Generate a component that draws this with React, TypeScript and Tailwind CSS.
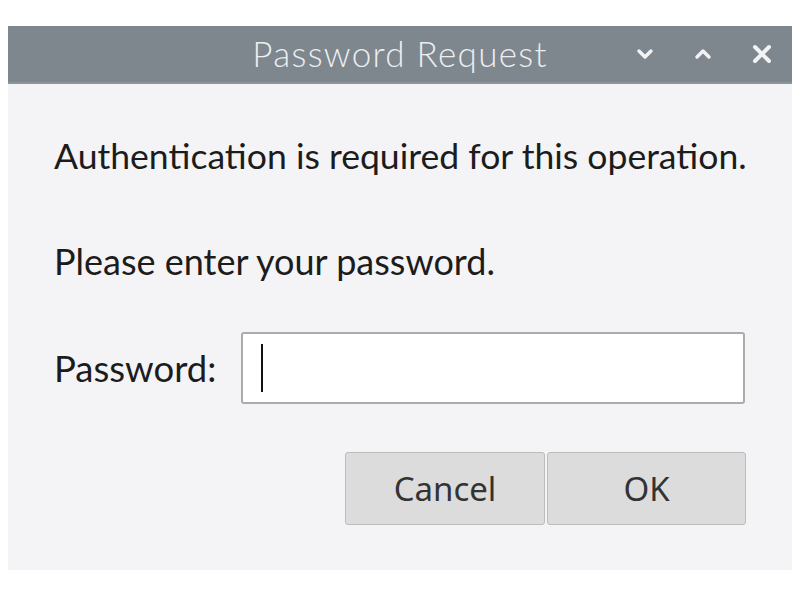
import React from "react";

export default function App() {
  return (
    <div className="w-[800px] h-[600px] bg-white pt-[26px] px-[8px]" style={{ fontFamily: "Lato, 'Noto Sans', sans-serif" }}>
      <div className="w-[784px] flex flex-col">
        <div className="h-[58px] bg-[#7e868e] border-b-2 border-[#8d949b] grid grid-cols-[1fr_auto_1fr] items-center">
          <div />
          <div className="text-[35px] font-light text-[#eceef0] tracking-[1.3px] leading-none pb-[2px]">Password Request</div>
          <div className="flex justify-end items-center gap-[40px] pr-[20px]">
            <svg width="18" height="12" viewBox="0 0 18 12"><path d="M3 3 L9 9 L15 3" fill="none" stroke="#f2f3f4" strokeWidth="3.5" strokeLinecap="round" strokeLinejoin="round" /></svg>
            <svg width="18" height="12" viewBox="0 0 18 12"><path d="M3 9 L9 3 L15 9" fill="none" stroke="#f2f3f4" strokeWidth="3.5" strokeLinecap="round" strokeLinejoin="round" /></svg>
            <svg width="20" height="20" viewBox="0 0 20 20"><path d="M3 3 L17 17 M17 3 L3 17" fill="none" stroke="#f2f3f4" strokeWidth="4" strokeLinecap="round" /></svg>
          </div>
        </div>
        <div className="h-[486px] bg-[#f4f4f6] pl-[46px] pr-[46px] flex flex-col text-[#1c1c1c]">
          <div className="mt-[50px] text-[35.6px] leading-[44px] whitespace-nowrap">Authentication is required for this operation.</div>
          <div className="mt-[61px] text-[36px] leading-[44px] whitespace-nowrap">Please enter your password.</div>
          <div className="mt-[49px] flex items-center gap-[25px]">
            <div className="text-[36.5px] leading-[44px] whitespace-nowrap">Password:</div>
            <div className="w-[504px] h-[72px] bg-white border-2 border-[#acacac] rounded-[3px] flex items-center pl-[18px]">
              <div className="w-[2px] h-[48px] bg-[#111]" />
            </div>
          </div>
          <div className="mt-[48px] flex justify-end gap-[2px]" style={{ fontFamily: "'Noto Sans', sans-serif" }}>
            <div className="w-[200px] h-[73px] bg-[#dcdcdc] border border-[#bcbcbc] rounded-[3px] flex items-center justify-center text-[33px] text-[#333]">Cancel</div>
            <div className="w-[199px] h-[73px] bg-[#dcdcdc] border border-[#bcbcbc] rounded-[3px] flex items-center justify-center text-[33px] text-[#333]">OK</div>
          </div>
        </div>
      </div>
    </div>
  );
}
